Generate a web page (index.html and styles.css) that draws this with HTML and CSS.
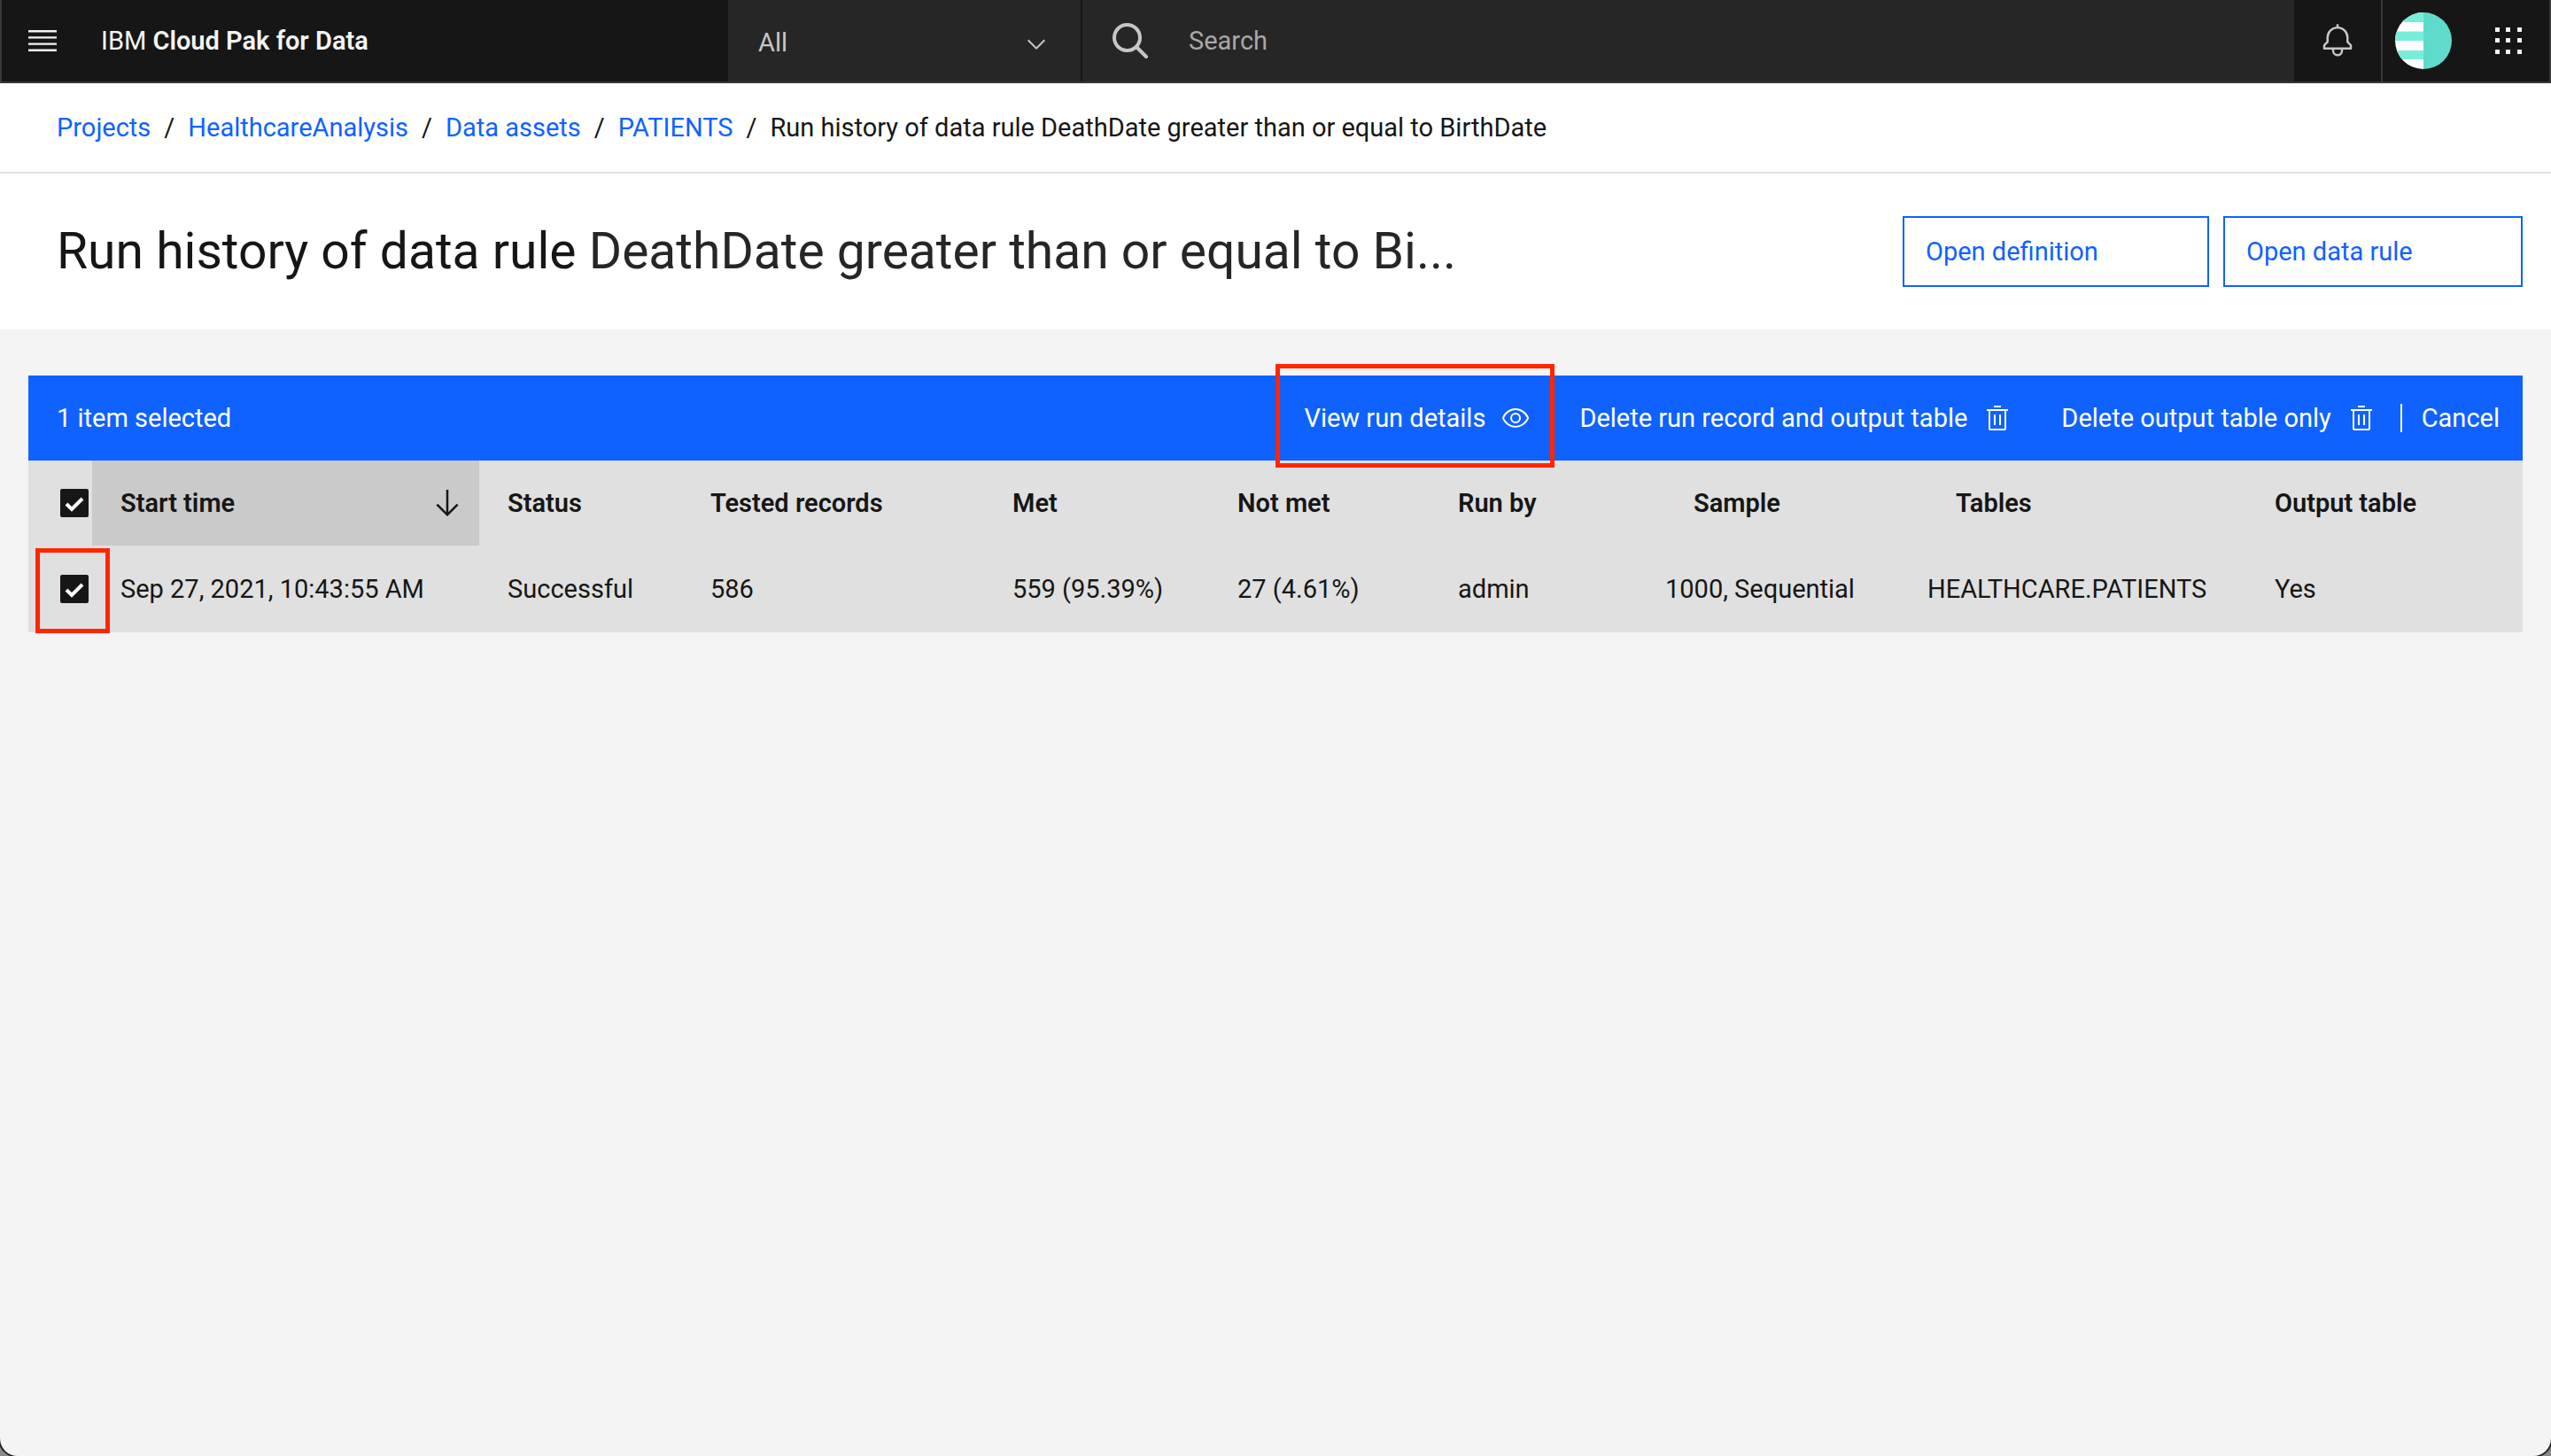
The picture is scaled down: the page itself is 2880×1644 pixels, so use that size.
FILE: index.html
```html
<!DOCTYPE html>
<html lang="en">
<head>
<meta charset="utf-8">
<title>Run history - IBM Cloud Pak for Data</title>
<link rel="stylesheet" href="styles.css">
</head>
<body>
<div class="window">
  <header class="topbar">
    <div class="brand">
      <button class="icon-button menu-button" type="button" aria-label="Menu">
        <svg class="icon-lg" viewBox="0 0 20 20"><path d="M2 4h16v1.2H2zM2 7.6h16v1.2H2zM2 11.2h16v1.2H2zM2 14.8h16V16H2z"/></svg>
      </button>
      <a class="brand-name" href="#">IBM <strong>Cloud Pak for Data</strong></a>
    </div>
    <div class="scope">
      <select class="scope-select" aria-label="Search scope"><option>All</option></select>
    </div>
    <div class="search">
      <svg class="icon-lg search-icon" viewBox="0 0 40 40" aria-hidden="true"><circle cx="16.500" cy="16.500" r="14.500"/><path d="m27 27 11 11"/></svg>
      <input class="search-input" type="search" placeholder="Search" aria-label="Search">
    </div>
    <div class="tools">
      <button class="icon-button tool-bell" type="button" aria-label="Notifications">
        <svg class="icon-lg" viewBox="0 0 32 32"><path d="M28.7 19.3 26 16.6V13a10 10 0 0 0-9-9.9V1h-2v2.1A10 10 0 0 0 6 13v3.6l-2.7 2.7A1 1 0 0 0 3 20v3a1 1 0 0 0 1 1h7v.8a5.1 5.1 0 0 0 4.5 5.2 5 5 0 0 0 5.5-5v-1h7a1 1 0 0 0 1-1v-3a1 1 0 0 0-.3-.7ZM19 25a3 3 0 0 1-6 0v-1h6Zm8-3H5v-1.6l2.7-2.7A1 1 0 0 0 8 17v-4a8 8 0 0 1 16 0v4a1 1 0 0 0 .3.7l2.7 2.7Z"/></svg>
      </button>
      <button class="icon-button tool-avatar" type="button" aria-label="Profile">
        <svg class="avatar" viewBox="0 0 64 64"><defs><clipPath id="round"><circle cx="32" cy="32" r="32"/></clipPath></defs><g clip-path="url(#round)"><path fill="#fff" d="M0 0h32v64H0z"/><path fill="#77eedb" d="M0 0h32v11H0zM0 21.500h32v10.500H0zM0 43h32v10H0z"/><path fill="#5fdbcb" d="M32 0h32v64H32z"/></g></svg>
      </button>
      <button class="icon-button tool-apps" type="button" aria-label="App switcher">
        <svg class="icon-lg" viewBox="0 0 40 40"><path d="M5 5h5v5H5zM17 5h5v5h-5zM30 5h5v5h-5zM5 17h5v5H5zM17 17h5v5h-5zM30 17h5v5h-5zM5 30h5v5H5zM17 30h5v5h-5zM30 30h5v5h-5z"/></svg>
      </button>
    </div>
  </header>

  <nav class="breadcrumb" aria-label="Breadcrumb">
    <ol class="crumbs">
      <li><a href="#">Projects</a></li>
      <li><a href="#">HealthcareAnalysis</a></li>
      <li><a href="#">Data assets</a></li>
      <li><a href="#">PATIENTS</a></li>
      <li aria-current="page">Run history of data rule DeathDate greater than or equal to BirthDate</li>
    </ol>
  </nav>

  <section class="page-head">
    <h1 class="title">Run history of data rule <span class="rule-name">DeathDate greater than or equal to Bi...</span></h1>
    <div class="page-actions">
      <button class="outline-button definition-button" type="button">Open definition</button>
      <button class="outline-button rule-button" type="button">Open data rule</button>
    </div>
  </section>

  <main class="content">
    <div class="batch-bar">
      <p class="batch-count">1 item selected</p>
      <div class="batch-actions">
        <button class="batch-button callout callout-action" type="button">View run details
          <svg class="icon" viewBox="0 0 16 16"><path d="M15.500 7.800C14.300 4.700 11.300 2.600 8 2.500 4.700 2.600 1.700 4.700.5 7.800v.3c1.200 3.100 4.100 5.200 7.500 5.300 3.300-.1 6.300-2.200 7.500-5.300v-.3ZM8 12.500c-2.700 0-5.400-2-6.500-4.500 1-2.500 3.800-4.500 6.500-4.500s5.400 2 6.500 4.500c-1.100 2.500-3.900 4.500-6.500 4.500Z"/><path d="M8 5a3 3 0 1 0 0 6 3 3 0 0 0 0-6Zm0 5a2 2 0 1 1 0-4 2 2 0 0 1 0 4Z"/></svg>
        </button>
        <button class="batch-button" type="button">Delete run record and output table
          <svg class="icon" viewBox="0 0 32 32"><path d="M12 12h2v12h-2zM18 12h2v12h-2zM12 2h8v2h-8z"/><path d="M4 6v2h2v20a2 2 0 0 0 2 2h16a2 2 0 0 0 2-2V8h2V6ZM8 28V8h16v20Z"/></svg>
        </button>
        <button class="batch-button" type="button">Delete output table only
          <svg class="icon" viewBox="0 0 32 32"><path d="M12 12h2v12h-2zM18 12h2v12h-2zM12 2h8v2h-8z"/><path d="M4 6v2h2v20a2 2 0 0 0 2 2h16a2 2 0 0 0 2-2V8h2V6ZM8 28V8h16v20Z"/></svg>
        </button>
        <button class="batch-button batch-cancel" type="button">Cancel</button>
      </div>
    </div>

    <table class="runs">
      <colgroup>
        <col class="col-check"><col class="col-start"><col class="col-status"><col class="col-tested"><col class="col-met"><col class="col-notmet"><col class="col-runby"><col class="col-sample"><col class="col-tables"><col class="col-output">
      </colgroup>
      <thead>
        <tr>
          <th class="check-cell" scope="col"><input class="check" type="checkbox" checked aria-label="Select all rows"></th>
          <th class="sorted" scope="col" aria-sort="descending">
            <button class="sort-button" type="button">Start time
              <svg class="icon-lg" viewBox="0 0 32 32"><path d="M24.590 16.590 17 24.170V4h-2v20.170l-7.590-7.580L6 18l10 10 10-10Z"/></svg>
            </button>
          </th>
          <th scope="col">Status</th>
          <th scope="col">Tested records</th>
          <th scope="col">Met</th>
          <th scope="col">Not met</th>
          <th scope="col">Run by</th>
          <th class="indented" scope="col">Sample</th>
          <th class="indented" scope="col">Tables</th>
          <th scope="col">Output table</th>
        </tr>
      </thead>
      <tbody>
        <tr>
          <td class="check-cell"><span class="callout callout-check"><input class="check" type="checkbox" checked aria-label="Select run of Sep 27, 2021"></span></td>
          <td>Sep 27, 2021, 10:43:55 AM</td>
          <td>Successful</td>
          <td>586</td>
          <td>559 (95.39%)</td>
          <td>27 (4.61%)</td>
          <td>admin</td>
          <td>1000, Sequential</td>
          <td>HEALTHCARE.PATIENTS</td>
          <td>Yes</td>
        </tr>
      </tbody>
    </table>
  </main>
</div>
</body>
</html>
```

FILE: styles.css
```css
* { box-sizing: border-box; }

html { background: #8a8a8a; }

body {
  margin: 0;
  color: #161616;
  font-family: Roboto, "Liberation Sans", sans-serif;
  font-size: 29px;
  line-height: 36px;
}

button, input, select { margin: 0; font: inherit; }

button {
  padding: 0;
  border: 0;
  background: none;
  cursor: pointer;
}

svg { flex: none; fill: currentColor; }

.icon { width: 32px; height: 32px; }
.icon-lg { width: 40px; height: 40px; }

.window {
  display: flex;
  flex-direction: column;
  min-height: 100vh;
  overflow: hidden;
  border-radius: 0 0 20px 20px;
  background: #f4f4f4;
  box-shadow: 0 0 0 2px #262626;
}

/* Top bar */
.topbar {
  display: flex;
  height: 94px;
  border: 2px solid #393939;
  border-top: 0;
  background: #262626;
  color: #f4f4f4;
}

.brand {
  display: flex;
  flex: none;
  align-items: center;
  gap: 46px;
  width: 820px;
  padding: 0 26px;
  background: #161616;
}

.icon-button {
  display: flex;
  align-items: center;
  justify-content: center;
  color: inherit;
}

.brand-name { color: inherit; text-decoration: none; }
.brand-name strong { font-weight: 600; }

.scope {
  flex: none;
  width: 400px;
  border-right: 2px solid #161616;
}

.scope-select {
  width: 100%;
  height: 100%;
  padding: 4px 34px 0;
  appearance: none;
  border: 0;
  background: url("data:image/svg+xml,%3Csvg xmlns='http://www.w3.org/2000/svg' width='32' height='32' viewBox='0 0 16 16'%3E%3Cpath fill='%23c6c6c6' d='M8 11 3 6l.7-.7L8 9.600l4.300-4.300.7.7z'/%3E%3C/svg%3E") no-repeat right 34px top 34px;
  color: #c6c6c6;
}

.search {
  display: flex;
  flex: 1;
  align-items: center;
  gap: 46px;
  padding-left: 34px;
  color: #c6c6c6;
}

.search-icon {
  fill: none;
  stroke: currentColor;
  stroke-width: 4px;
  stroke-linecap: round;
}

.search-input {
  flex: 1;
  min-width: 0;
  padding: 0;
  border: 0;
  outline: 0;
  background: none;
  color: inherit;
}

.search-input::placeholder { color: #a8a8a8; opacity: 1; }

.tools { display: flex; flex: none; background: #161616; }
.tool-bell { width: 100px; border-right: 2px solid #393939; color: #c6c6c6; }
.tool-avatar { width: 92px; }
.tool-apps { width: 96px; padding-left: 4px; }
.avatar { width: 64px; height: 64px; }

/* Breadcrumb */
.breadcrumb {
  padding: 32px 64px;
  border-bottom: 2px solid #e0e0e0;
  background: #fff;
}

.crumbs {
  display: flex;
  margin: 0;
  padding: 0;
  list-style: none;
}

.crumbs li + li::before { content: "/"; margin: 0 15px; }

.crumbs a { color: #0f62fe; text-decoration: none; }

/* Page heading */
.page-head {
  display: flex;
  align-items: center;
  justify-content: space-between;
  padding: 48px 32px 48px 64px;
  background: #fff;
}

.title {
  margin: 0;
  font-size: 57px;
  font-weight: 400;
  line-height: 80px;
}

.rule-name { color: #262626; }

.page-actions { display: flex; gap: 16px; }

.outline-button {
  height: 80px;
  padding: 0 24px;
  border: 2px solid #0f62fe;
  color: #0f62fe;
  text-align: left;
}

.definition-button { width: 346px; }
.rule-button { width: 338px; }

/* Run table */
.content { padding: 52px 32px; }

.batch-bar {
  display: flex;
  justify-content: space-between;
  height: 96px;
  padding-left: 32px;
  background: #0f62fe;
  color: #fff;
}

.batch-count { margin: 0; line-height: 96px; }

.batch-actions { display: flex; }

.batch-button {
  display: flex;
  align-items: center;
  gap: 18px;
  padding: 0 28px;
  color: inherit;
}

.batch-cancel { padding: 0 26px 0 0; }

.batch-cancel::before {
  content: "";
  width: 2px;
  height: 32px;
  margin-right: 4px;
  background: #fff;
}

.callout { position: relative; }

.callout::after {
  content: "";
  position: absolute;
  border: 5px solid #ff2600;
  pointer-events: none;
}

.callout-action::after { inset: -13px 0 -8px -4px; }

.runs {
  width: 100%;
  table-layout: fixed;
  border-collapse: collapse;
  background: #e0e0e0;
  text-align: left;
}

.runs th, .runs td { padding: 0 0 0 32px; white-space: nowrap; }
.runs th { height: 96px; font-weight: 600; }
.runs td { height: 98px; }
.runs .sorted { padding: 0; background: #cacaca; }
.runs .indented { padding-left: 64px; }
.runs .check-cell { padding: 0 0 0 36px; }

.sort-button {
  display: flex;
  align-items: center;
  justify-content: space-between;
  width: 100%;
  height: 96px;
  padding: 0 16px 0 32px;
  font-weight: inherit;
  color: inherit;
}

.check {
  display: block;
  width: 32px;
  height: 32px;
  appearance: none;
  border: 2px solid #161616;
  border-radius: 2px;
}

.check:checked {
  background: #161616 url("data:image/svg+xml,%3Csvg xmlns='http://www.w3.org/2000/svg' viewBox='0 0 32 32'%3E%3Cpath fill='none' stroke='%23fff' stroke-width='4' d='m7 17 6 6 12-12'/%3E%3C/svg%3E") center / 32px no-repeat;
}

.callout-check { display: block; width: 32px; }
.callout-check::after { inset: -30px -24px -34px -28px; }

.col-check { width: 72px; }
.col-start { width: 437px; }
.col-status { width: 229px; }
.col-tested { width: 341px; }
.col-met { width: 254px; }
.col-notmet { width: 249px; }
.col-runby { width: 234px; }
.col-sample { width: 296px; }
.col-tables { width: 392px; }
.col-output { width: 312px; }
```
